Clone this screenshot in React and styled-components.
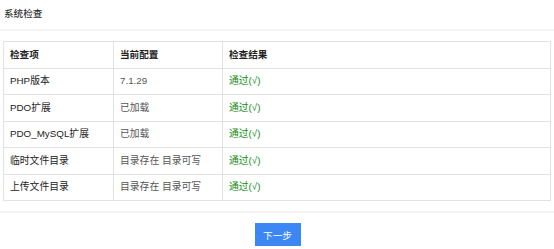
import React from 'react';
import styled, { createGlobalStyle } from 'styled-components';

const GlobalStyle = createGlobalStyle`
    body {
        margin: 0;
        background: #fff;
        font-family: "Liberation Sans", "Noto Sans CJK SC", sans-serif;
        font-size: 9.6px;
        color: #333;
    }
`;

const checks = [
    { name: 'PHP版本', config: '7.1.29', result: '通过(√)' },
    { name: 'PDO扩展', config: '已加载', result: '通过(√)' },
    { name: 'PDO_MySQL扩展', config: '已加载', result: '通过(√)' },
    { name: '临时文件目录', config: '目录存在 目录可写', result: '通过(√)' },
    { name: '上传文件目录', config: '目录存在 目录可写', result: '通过(√)' },
];

function App() {
    return (
        <>
            <GlobalStyle />
            <Page>
                <Header>系统检查</Header>
                <Divider />
                <Content>
                    <Table>
                        <colgroup>
                            <col width="110" />
                            <col width="109" />
                            <col />
                        </colgroup>
                        <thead>
                            <tr>
                                <HeadCell>检查项</HeadCell>
                                <HeadCell>当前配置</HeadCell>
                                <HeadCell>检查结果</HeadCell>
                            </tr>
                        </thead>
                        <tbody>
                            {checks.map((item) => (
                                <tr key={item.name}>
                                    <Cell $tone="name">{item.name}</Cell>
                                    <Cell $tone="config">{item.config}</Cell>
                                    <Cell $tone="ok">{item.result}</Cell>
                                </tr>
                            ))}
                        </tbody>
                    </Table>
                </Content>
                <Divider />
                <Footer>
                    <NextButton type="button">下一步</NextButton>
                </Footer>
            </Page>
        </>
    );
}

export default App;

const Page = styled.div`
    width: 554px;
`;

const Header = styled.div`
    height: 29px;
    line-height: 27px;
    padding: 0 4px;
    font-weight: 500;
    color: #333;
`;

const Divider = styled.div`
    height: 2px;
    background: #f4f4f4;
`;

const Content = styled.div`
    padding: 10px 3px;
`;

const Table = styled.table`
    width: 100%;
    border-collapse: collapse;
    table-layout: fixed;
    border: 1px solid #e2e2e2;
`;

const HeadCell = styled.th`
    height: 25.5px;
    padding: 0 6px;
    line-height: 12px;
    text-align: left;
    font-weight: 600;
    color: #222;
    border: 1px solid #e2e2e2;
`;

const toneColors = {
    name: '#222',
    config: '#555',
    ok: '#128c12',
};

const Cell = styled.td`
    height: 25.5px;
    padding: 0 6px;
    line-height: 12px;
    font-size: 9.8px;
    color: ${(p) => toneColors[p.$tone]};
    border: 1px solid #e2e2e2;
    white-space: nowrap;
`;

const Footer = styled.div`
    display: flex;
    justify-content: center;
    padding-top: 10px;
    padding-left: 1px;
`;

const NextButton = styled.button`
    width: 46px;
    height: 23px;
    border: none;
    border-radius: 0;
    background: #3d87f5;
    color: #fff;
    font-family: inherit;
    font-size: 9.6px;
    padding: 0;
    cursor: pointer;
`;
